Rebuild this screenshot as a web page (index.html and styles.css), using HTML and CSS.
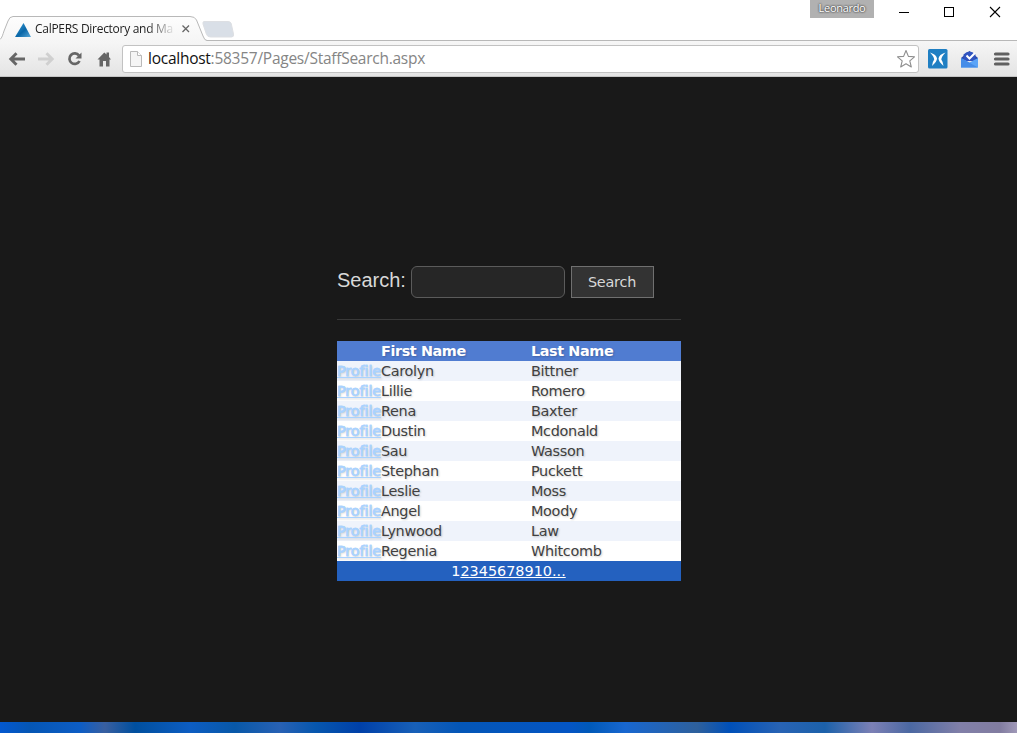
FILE: index.html
```
<!DOCTYPE html>
<html lang="en">
<head>
<meta charset="utf-8">
<title>CalPERS Directory and Maps</title>
<link rel="stylesheet" href="styles.css">
</head>
<body>
<div class="window">
  <header class="titlebar">
    <svg class="tab-shapes" width="260" height="27" viewBox="0 0 260 27">
      <defs>
        <linearGradient id="tri" x1="0" y1="0" x2="1" y2="1"><stop offset="0" stop-color="#3aa0d8"/><stop offset=".55" stop-color="#0a67a8"/><stop offset="1" stop-color="#58a8d8"/></linearGradient>
        <linearGradient id="tabfill" x1="0" y1="0" x2="0" y2="1"><stop offset="0" stop-color="#fdfdfd"/><stop offset="1" stop-color="#f5f5f5"/></linearGradient>
      </defs>
      <path d="M204 5.500H228Q230.500 5.500 231.200 7.500L233.500 18Q234 21 231.500 21H210.500Q207.500 21 206.500 18.500L203 8Q202.500 5.500 204 5.500Z" fill="#d9dfe7" stroke="#dddfe3"/>
      <path d="M0 24C2 22 3 18 4 15L8 5Q9.500 .5 13 .5H190Q195 .5 196.500 4L203 20Q204.500 24.500 207 24.500H260V27H0Z" fill="url(#tabfill)"/>
      <path d="M0 23.500C2 22 3 18 4 15L8 5Q9.500 .5 13 .5H190Q195 .5 196.500 4L203 20Q204.500 24.500 207 24.500H260" fill="none" stroke="#b8b8b8"/>
      <path d="M23.500 7L31 21H15Z" fill="url(#tri)"/>
      <path d="M182.500 9.500L189 16M189 9.500L182.500 16" stroke="#666" stroke-width="1.300"/>
    </svg>
    <div class="tab-title">CalPERS Directory and Ma</div>
    <div class="user">Leonardo</div>
    <svg class="controls" width="120" height="24" viewBox="0 0 120 24" fill="none" stroke="#000">
      <path d="M2 12.500h10"/><rect x="47.500" y="7.500" width="9" height="9"/><path d="M93 7l10 10M103 7L93 17" stroke-width="1.100"/>
    </svg>
  </header>
  <nav class="toolbar">
    <svg width="120" height="36" viewBox="0 0 120 36" fill="none">
      <path d="M25 18H11M16.500 12.300L10.800 18L16.500 23.700" stroke="#666" stroke-width="2.900"/>
      <path d="M38 18H52M46.500 12.300L52.200 18L46.500 23.700" stroke="#d0d0d0" stroke-width="2.900"/>
      <path d="M79 14.500A5.300 5.300 0 1 0 79.500 20" stroke="#666" stroke-width="2.700"/>
      <path d="M81.500 11.500V17.500H75.500Z" fill="#666"/>
      <path d="M97.500 18.500L104.300 11.500L106.500 13.500V11.500H109V16L111 18.500H109.500V25.500H106V20H103V25.500H99.500V18.500Z" fill="#666"/>
    </svg>
    <div class="address">
      <svg width="13" height="18" viewBox="0 0 13 18"><path d="M.5 1.500H7.500L11.500 5.500V16.500H.5Z" fill="#f5f5f5" stroke="#b9b9b9"/><path d="M7.500 1.500V5.500H11.500" fill="#fff" stroke="#b9b9b9"/></svg>
      <div class="url"><b>localhost</b>:58357/Pages/StaffSearch.aspx</div>
      <svg width="20" height="20" viewBox="0 0 20 20"><path d="M10 1.500L12.400 7.400L18.500 7.800L13.800 11.800L15.300 18L10 14.700L4.700 18L6.200 11.800L1.500 7.800L7.600 7.400Z" fill="#fff" stroke="#8e8e8e" stroke-width="1.100" stroke-linejoin="round"/></svg>
    </div>
    <svg width="98" height="36" viewBox="919 0 98 36">
      <rect x="928" y="8" width="19.500" height="19.500" rx="1.500" fill="#1f7fc3"/>
      <path d="M930 11.500Q936.500 13.500 937 17.500Q937 20.500 932 25Q932.300 21 934.200 18.500Q934 15.500 930 11.500ZM945.500 11.500Q939 13.500 938.500 17.500Q938.500 20.500 943.500 25Q943.200 21 941.300 18.500Q941.500 15.500 945.500 11.500Z" fill="#fff"/>
      <path d="M961 17L969.500 10L978 17V20H961Z" fill="#2a48a8"/>
      <path d="M963.500 13.500Q969.500 7.500 975.500 13.500V20H963.500Z" fill="#3054c0"/>
      <path d="M961 17L969.500 21.500L978 17V26.500H961Z" fill="#5ba4f7"/>
      <path d="M961 17L978 26.500H961Z" fill="#468de8"/>
      <path d="M966.500 14.500L969.500 17.500L975 12" fill="none" stroke="#fff" stroke-width="2"/>
      <path d="M995.500 13H1008M995.500 18H1008M995.500 23H1008" stroke="#606060" stroke-width="3.200" stroke-linecap="round"/>
    </svg>
  </nav>
  <main class="page">
    <div class="content">
      <form class="search">
        <label class="search-label" for="q">Search:</label>
        <input class="search-input" id="q" type="text">
        <button class="search-button" type="button">Search</button>
      </form>
      <div class="staff">
        <div class="row head"><span></span><span>First Name</span><span>Last Name</span></div>
        <div class="row alt"><a href="#">Profile</a><span>Carolyn</span><span>Bittner</span></div>
        <div class="row"><a href="#">Profile</a><span>Lillie</span><span>Romero</span></div>
        <div class="row alt"><a href="#">Profile</a><span>Rena</span><span>Baxter</span></div>
        <div class="row"><a href="#">Profile</a><span>Dustin</span><span>Mcdonald</span></div>
        <div class="row alt"><a href="#">Profile</a><span>Sau</span><span>Wasson</span></div>
        <div class="row"><a href="#">Profile</a><span>Stephan</span><span>Puckett</span></div>
        <div class="row alt"><a href="#">Profile</a><span>Leslie</span><span>Moss</span></div>
        <div class="row"><a href="#">Profile</a><span>Angel</span><span>Moody</span></div>
        <div class="row alt"><a href="#">Profile</a><span>Lynwood</span><span>Law</span></div>
        <div class="row"><a href="#">Profile</a><span>Regenia</span><span>Whitcomb</span></div>
        <div class="pager">1<u>2345678910...</u></div>
      </div>
    </div>
  </main>
  <footer class="desktop"></footer>
</div>
</body>
</html>
```
FILE: styles.css
```
* { box-sizing: border-box; }
body { margin: 0; overflow: hidden; background: #191919; }
.window { width: 1017px; height: 733px; display: flex; flex-direction: column; }
svg { display: block; flex: none; }

.titlebar { position: relative; height: 41px; background: #fff; border-bottom: 1px solid #b8b8b8; display: flex; align-items: flex-start; }
.tab-shapes { position: absolute; left: 0; top: 16px; }
.tab-title {
  position: relative; width: 139px; margin: 20px 0 0 35px; overflow: hidden; white-space: nowrap;
  font: 12px/18px "Open Sans", sans-serif; letter-spacing: -.29px; color: #222;
  -webkit-mask-image: linear-gradient(90deg, #000 112px, transparent 141px);
  mask-image: linear-gradient(90deg, #000 112px, transparent 141px);
}
.user {
  width: 64px; height: 18px; margin-left: auto; background: #b1b1b1; color: #fff; text-align: center;
  font: 11px/16px "Open Sans", sans-serif; letter-spacing: -.3px;
  text-shadow: 0 0 2px #333, 0 0 2px #444;
}
.controls { margin-left: 23px; }

.toolbar { height: 36px; display: flex; align-items: center; background: linear-gradient(#f6f6f6, #e4e4e4); border-bottom: 1px solid #c5c5c5; }
.address { flex: 1; height: 28px; display: flex; align-items: center; margin-left: 2px; padding: 0 2px 0 7px; background: #fff; border: 1px solid #c2c2c2; border-radius: 3px; }
.url { flex: 1; padding: 0 0 1px 5px; font: 15.500px/20px "Open Sans", sans-serif; letter-spacing: -.26px; color: #858585; white-space: nowrap; }
.url b { font-weight: 400; color: #111; }

.page { flex: 1; background: #191919; }
.content { width: 344px; margin: 189px 0 0 337px; }
.search { display: flex; height: 54px; margin: 0 0 21px; border-bottom: 1px solid #393939; align-items: flex-start; }
.search-label { width: 74px; font: 20px/29px "Liberation Sans", Arial, sans-serif; color: #d8d8d8; }
.search-input { width: 154px; height: 32px; margin: 0 6px 0 0; background: #262626; border: 1px solid #5b5b5b; border-radius: 6px; }
.search-button { width: 83px; height: 32px; padding: 0 1px 0 0; background: #333; border: 1px solid #707070; color: #d8d8d8; font: 14.400px "DejaVu Sans", Verdana, sans-serif; letter-spacing: -.2px; }

.staff { font: 14.400px/20px "DejaVu Sans", Verdana, sans-serif; letter-spacing: -.3px; color: #404040; text-shadow: 1px 1px 2px rgba(0, 0, 0, .2); }
.row { display: grid; grid-template-columns: 44px 150px 150px; height: 20px; background: #fff; white-space: nowrap; }
.alt { background: #eff3fb; }
.head { background: #507cd1; color: #fff; font-weight: 700; letter-spacing: -.4px; }
.row a { justify-self: start; color: #a9d2ff; letter-spacing: -.1px; -webkit-text-stroke: .5px #a9d2ff; }
.pager { height: 20px; padding-right: 1px; background: #2461bf; color: #fff; text-align: center; letter-spacing: 0; text-shadow: none; }

.desktop {
  height: 11px;
  background: linear-gradient(90deg, #0358d0 0, #0556b4 30px, #0d5dc5 80px, #395fa0 105px, #004f9e 135px, #0d5dc2 190px, #0858a8 235px, #2861b4 280px, #0757ae 315px, #0040a8 360px, #1860b8 415px, #0456b7 460px, #0455c4 570px, #0059b8 590px, #1867d0 625px, #2e609c 697px, #0050b9 730px, #2863b4 780px, #1c61aa 825px, #7c80b5 872px, #4b68a2 910px, #817fa8 960px, #817ca0 1000px, #a099b8 1017px);
}
```
